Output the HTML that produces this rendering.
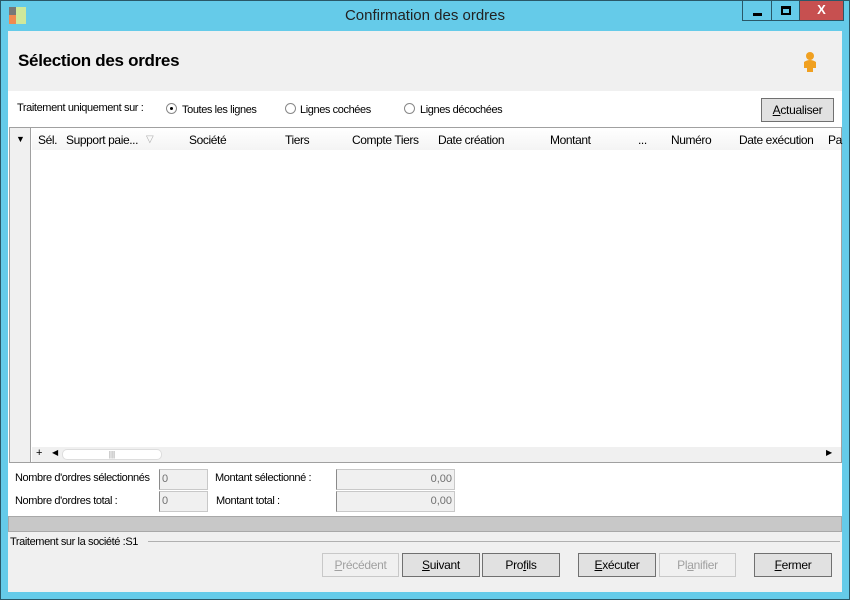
<!DOCTYPE html>
<html><head><meta charset="utf-8"><style>
*{margin:0;padding:0;box-sizing:border-box}
body{width:850px;height:600px;background:#65cbe9;font-family:"Liberation Sans",sans-serif;font-size:12px;color:#000;position:relative;overflow:hidden}
.a{position:absolute}
.btn{position:absolute;top:553px;height:24px;border:1px solid #707070;background:#e1e1e1;text-align:center;line-height:22px;font-size:12px;letter-spacing:-0.3px}
.dis{color:#a0a0a0;border-color:#c8c8c8;background:#f0f0f0}
.hd{position:absolute;top:133px;font-size:12px;letter-spacing:-0.4px}
.inp{position:absolute;height:21px;background:#f0f0f0;border:1px solid #c8c8c8;border-left-color:#8a8a8a;color:#707070;font-size:11px;line-height:18px}
.s{font-size:11px;letter-spacing:-0.4px}
</style></head><body>
<div class="a" style="left:0;top:0;width:850px;height:600px;border:1px solid #2a5868"></div>
<div class="a" style="left:9px;top:7px;width:7px;height:8px;background:#777"></div>
<div class="a" style="left:9px;top:15px;width:7px;height:9px;background:#f08a50"></div>
<div class="a" style="left:16px;top:7px;width:10px;height:17px;background:#cfe89a"></div>
<div class="a" style="left:0;top:7px;width:850px;text-align:center;font-size:15px;color:#222">Confirmation des ordres</div>
<div class="a" style="left:742px;top:1px;width:30px;height:20px;border:1px solid #2a5868;border-top:0"><div class="a" style="left:10px;top:12px;width:9px;height:3px;background:#000"></div></div>
<div class="a" style="left:771px;top:1px;width:29px;height:20px;border:1px solid #2a5868;border-top:0"><div class="a" style="left:9px;top:5px;width:10px;height:9px;border:2px solid #000;border-top-width:3px"></div></div>
<div class="a" style="left:799px;top:1px;width:45px;height:20px;background:#c75050;border:1px solid #2a5868;border-top:0;color:#fff;text-align:center;font-weight:bold;font-size:13px;line-height:18px">X</div>
<div class="a" style="left:8px;top:31px;width:834px;height:561px;background:#f0f0f0"></div>
<div class="a" style="left:18px;top:51px;font-size:17px;font-weight:bold;letter-spacing:-0.3px">Sélection des ordres</div>
<svg class="a" style="left:800px;top:51px" width="20" height="22"><circle cx="10" cy="5" r="4" fill="#f0a020"/><path d="M4 11 Q10 7 16 11 L16 17 L13 17 L13 21 L7 21 L7 17 L4 17Z" fill="#f0a020"/></svg>
<div class="a" style="left:8px;top:91px;width:834px;height:425px;background:#fff"></div>
<div class="a s" style="left:17px;top:102px">Traitement uniquement sur :</div>
<div class="a" style="left:166px;top:103px;width:11px;height:11px;border:1px solid #888;border-radius:50%"><div class="a" style="left:3px;top:3px;width:3px;height:3px;background:#000;border-radius:50%"></div></div>
<div class="a s" style="left:182px;top:104px">Toutes les lignes</div>
<div class="a" style="left:285px;top:103px;width:11px;height:11px;border:1px solid #888;border-radius:50%"></div>
<div class="a s" style="left:300px;top:104px">Lignes cochées</div>
<div class="a" style="left:404px;top:103px;width:11px;height:11px;border:1px solid #888;border-radius:50%"></div>
<div class="a s" style="left:420px;top:104px">Lignes décochées</div>
<div class="a" style="left:761px;top:98px;width:73px;height:24px;border:1px solid #707070;background:#e1e1e1;text-align:center;line-height:22px;letter-spacing:-0.3px"><u>A</u>ctualiser</div>
<div class="a" style="left:9px;top:127px;width:833px;height:336px;border:1px solid #a0a0a0;background:#fff"></div>
<div class="a" style="left:10px;top:128px;width:21px;height:334px;background:#f0f0f0;border-right:1px solid #a0a0a0"></div>
<div class="a" style="left:16px;top:134px;font-size:9px">▼</div>
<div class="a" style="left:32px;top:128px;width:809px;height:22px;background:linear-gradient(#fff,#f4f4f4)"></div>
<div class="hd" style="left:38px">Sél.</div>
<div class="hd" style="left:66px">Support paie...</div>
<div class="hd" style="left:146px;color:#aaa;font-size:10px;top:134px">▽</div>
<div class="hd" style="left:189px">Société</div>
<div class="hd" style="left:285px">Tiers</div>
<div class="hd" style="left:352px">Compte Tiers</div>
<div class="hd" style="left:438px">Date création</div>
<div class="hd" style="left:550px">Montant</div>
<div class="hd" style="left:638px">...</div>
<div class="hd" style="left:671px">Numéro</div>
<div class="hd" style="left:739px">Date exécution</div>
<div class="hd" style="left:828px">Pa</div>
<div class="a" style="left:32px;top:447px;width:809px;height:15px;background:#f0f0f0"></div>
<div class="a" style="left:36px;top:447px;font-size:11px">+</div>
<div class="a" style="left:52px;top:448px;font-size:8px">◀</div>
<div class="a" style="left:62px;top:449px;width:100px;height:11px;background:#fff;border:1px solid #ddd;border-radius:5px;text-align:center;font-size:8px;line-height:9px;color:#888">|||</div>
<div class="a" style="left:826px;top:448px;font-size:8px">▶</div>
<div class="a s" style="left:15px;top:472px">Nombre d'ordres sélectionnés</div>
<div class="inp" style="left:159px;top:469px;width:49px;padding-left:2px">0</div>
<div class="a s" style="left:215px;top:472px">Montant sélectionné :</div>
<div class="inp" style="left:336px;top:469px;width:119px;text-align:right;padding-right:2px">0,00</div>
<div class="a s" style="left:15px;top:495px">Nombre d'ordres total :</div>
<div class="inp" style="left:159px;top:491px;width:49px;padding-left:2px">0</div>
<div class="a s" style="left:216px;top:495px">Montant total :</div>
<div class="inp" style="left:336px;top:491px;width:119px;text-align:right;padding-right:2px">0,00</div>
<div class="a" style="left:8px;top:516px;width:834px;height:16px;background:#c8c8c8;border:1px solid #a8a8a8"></div>
<div class="a s" style="left:10px;top:536px">Traitement sur la société :S1</div>
<div class="a" style="left:148px;top:541px;width:692px;border-top:1px solid #b0b0b0"></div>
<div class="btn dis" style="left:322px;width:77px"><u>P</u>récédent</div>
<div class="btn" style="left:402px;width:78px"><u>S</u>uivant</div>
<div class="btn" style="left:482px;width:78px">Pro<u>f</u>ils</div>
<div class="btn" style="left:578px;width:78px"><u>E</u>xécuter</div>
<div class="btn dis" style="left:659px;width:77px">Pl<u>a</u>nifier</div>
<div class="btn" style="left:754px;width:78px"><u>F</u>ermer</div>
</body></html>
